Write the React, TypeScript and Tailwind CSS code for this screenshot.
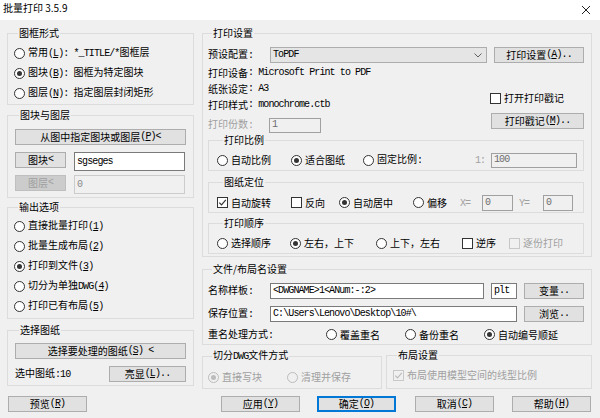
import React from "react";

type P = { children?: React.ReactNode; className?: string };

function M({ children, className = "" }: P) {
  return <span className={"font-['Liberation_Mono'] tracking-[-0.9px] " + className}>{children}</span>;
}

function Radio({
  checked = false,
  disabled = false,
  children,
  className = "",
}: P & { checked?: boolean; disabled?: boolean }) {
  return (
    <div className={"flex items-center shrink-0 " + className}>
      <span
        className={
          "w-[11px] h-[11px] rounded-full border flex items-center justify-center shrink-0 " +
          (disabled ? "border-[#bcbcbc] bg-[#f0f0f0]" : "border-[#333333] bg-white")
        }
      >
        {checked ? (
          <span className={"w-[5px] h-[5px] rounded-full " + (disabled ? "bg-[#bcbcbc]" : "bg-[#333333]")} />
        ) : null}
      </span>
      <span className={"ml-[3px] whitespace-nowrap " + (disabled ? "text-[#a0a0a0]" : "text-black")}>{children}</span>
    </div>
  );
}

function Check({
  checked = false,
  disabled = false,
  children,
  className = "",
}: P & { checked?: boolean; disabled?: boolean }) {
  return (
    <div className={"flex items-center shrink-0 " + className}>
      <span
        className={
          "w-[11px] h-[11px] border flex items-center justify-center shrink-0 " +
          (disabled ? "border-[#c8c8c8] bg-[#f0f0f0]" : "border-[#333333] bg-white")
        }
      >
        {checked ? (
          <svg width="9" height="9" viewBox="0 0 9 9">
            <path
              d="M1.3 4.6 L3.5 6.8 L7.8 1.8"
              stroke={disabled ? "#bcbcbc" : "#333333"}
              strokeWidth="1.2"
              fill="none"
            />
          </svg>
        ) : null}
      </span>
      <span className={"ml-[3px] whitespace-nowrap " + (disabled ? "text-[#a0a0a0]" : "text-black")}>{children}</span>
    </div>
  );
}

function Btn({ children, className = "" }: P) {
  return (
    <div
      className={
        "border border-[#adadad] bg-[#e1e1e1] flex items-center justify-center whitespace-nowrap shrink-0 " + className
      }
    >
      {children}
    </div>
  );
}

function Field({ children, className = "", disabled = false }: P & { disabled?: boolean }) {
  return (
    <div
      className={
        "border flex items-center pl-[2px] overflow-hidden whitespace-nowrap shrink-0 " +
        (disabled ? "bg-[#f0f0f0] border-[#a0a0a0] text-[#6d6d6d]" : "bg-white border-[#7a7a7a] text-black") +
        " " +
        className
      }
    >
      {children}
    </div>
  );
}

function Group({ title, legendMl = "ml-[4px]", className = "", children }: P & { title: React.ReactNode; legendMl?: string }) {
  return (
    <fieldset className={"border border-[#dcdcdc] min-w-0 " + className}>
      <legend className={"px-[1px] leading-[14px] " + legendMl}>{title}</legend>
      {children}
    </fieldset>
  );
}

export default function App() {
  return (
    <div className="w-[600px] h-[418px] bg-[#f0f0f0] text-[10px] leading-[14px] text-black font-['Noto_Sans_CJK_SC',sans-serif] overflow-hidden flex flex-col">
      {/* title bar */}
      <div className="h-[20px] bg-white flex items-start justify-between shrink-0">
        <div className="pl-[3px] pt-[1px] leading-[14px]">批量打印 3.5.9</div>
        <svg className="mt-[5px] mr-[9px]" width="10" height="10" viewBox="0 0 10 10">
          <path d="M1 1 L9 9 M9 1 L1 9" stroke="#222" strokeWidth="1" />
        </svg>
      </div>

      {/* main */}
      <div className="flex pl-[7px] pt-[6px] items-start">
        {/* left column */}
        <div className="w-[187px] flex flex-col shrink-0">
          <Group title="图框形式" className="pt-[3px] pb-[1px] pl-[6px]">
            <Radio className="h-[20px]">
              常用<M>(<u>L</u>): *_TITLE/*</M>图框层
            </Radio>
            <Radio checked className="h-[20px]">
              图块<M>(<u>B</u>): </M>图框为特定图块
            </Radio>
            <Radio className="h-[20px]">
              图层<M>(<u>N</u>): </M>指定图层封闭矩形
            </Radio>
          </Group>

          <Group title="图块与图层" className="mt-[3px] pb-[3px] px-[7px]">
            <Btn className="mt-[7px] h-[16px] w-full">
              从图中指定图块或图层<M>(<u>P</u>)&lt;</M>
            </Btn>
            <div className="mt-[7px] flex h-[19px] items-start">
              <Btn className="w-[51px] h-[16px]">
                图块<M>&lt;</M>
              </Btn>
              <Field className="ml-[8px] w-[111px] h-[19px]">
                <M>sgseges</M>
              </Field>
            </div>
            <div className="mt-[4px] flex h-[19px] items-start">
              <div className="w-[51px] h-[16px] border border-[#bfbfbf] bg-[#cccccc] text-[#a0a0a0] flex items-center justify-center shrink-0">
                图层<M>&lt;</M>
              </div>
              <div className="ml-[8px] w-[111px] h-[19px] border border-[#cccccc] bg-[#f0f0f0] text-[#8a8a8a] flex items-center pl-[2px] shrink-0">
                <M>0</M>
              </div>
            </div>
          </Group>

          <Group title="输出选项" className="mt-[2px] pt-[2px] pb-[2px] pl-[6px]">
            <Radio className="h-[20px]">
              直接批量打印<M>(<u>1</u>)</M>
            </Radio>
            <Radio className="h-[20px]">
              批量生成布局<M>(<u>2</u>)</M>
            </Radio>
            <Radio checked className="h-[20px]">
              打印到文件<M>(<u>3</u>)</M>
            </Radio>
            <Radio className="h-[20px]">
              切分为单独<M>DWG(<u>4</u>)</M>
            </Radio>
            <Radio className="h-[20px]">
              打印已有布局<M>(<u>5</u>)</M>
            </Radio>
          </Group>

          <Group title="选择图纸" className="mt-[4px] pb-[3px] px-[7px]">
            <Btn className="mt-[6px] h-[16px] w-full">
              选择要处理的图纸<M>(<u>S</u>) &lt;</M>
            </Btn>
            <div className="mt-[7px] h-[16px] flex items-center">
              <span className="whitespace-nowrap">
                选中图纸<M>:10</M>
              </span>
              <Btn className="ml-auto w-[77px] h-[16px]">
                亮显<M>(<u>L</u>)..</M>
              </Btn>
            </div>
          </Group>
        </div>

        {/* right column */}
        <div className="ml-[8px] w-[390px] flex flex-col shrink-0">
          <Group title="打印设置" className="pl-[5px] pr-[7px] pb-[2px]">
            <div className="mt-[7px] h-[16px] flex items-center">
              <span className="w-[62px] shrink-0 whitespace-nowrap">
                预设配置<M>:</M>
              </span>
              <div className="w-[217px] h-[16px] border border-[#adadad] bg-[#e5e5e5] flex items-center pl-[2px] pr-[4px] shrink-0">
                <M>ToPDF</M>
                <svg className="ml-auto" width="8" height="5" viewBox="0 0 8 5">
                  <path d="M0.5 0.5 L4 4 L7.5 0.5" stroke="#606060" fill="none" />
                </svg>
              </div>
              <Btn className="ml-[7px] w-[90px] h-[16px]">
                打印设置<M>(<u>A</u>)..</M>
              </Btn>
            </div>

            <div className="mt-[2px] flex">
              <div className="flex-1 flex flex-col">
                <div className="h-[16px] flex items-center whitespace-nowrap">
                  打印设备<M>: Microsoft Print to PDF</M>
                </div>
                <div className="h-[16px] flex items-center whitespace-nowrap">
                  纸张设定<M>: A3</M>
                </div>
                <div className="h-[16px] flex items-center whitespace-nowrap">
                  打印样式<M>: monochrome.ctb</M>
                </div>
                <div className="mt-[4px] h-[16px] flex items-center text-[#a0a0a0]">
                  <span className="w-[61px] shrink-0 whitespace-nowrap">
                    打印份数<M>:</M>
                  </span>
                  <Field disabled className="w-[52px] h-[15px]">
                    <M>1</M>
                  </Field>
                </div>
              </div>
              <div className="w-[94px] flex flex-col shrink-0">
                <Check className="mt-[26px] h-[14px]">打开打印戳记</Check>
                <Btn className="mt-[8px] ml-auto w-[93px] h-[16px]">
                  打印戳记<M>(<u>M</u>)..</M>
                </Btn>
              </div>
            </div>

            <Group title="打印比例" legendMl="ml-[6px]" className="pl-[8px] pb-[2px]">
              <div className="mt-[5px] h-[16px] flex items-center">
                <Radio className="w-[74px]">自动比例</Radio>
                <Radio checked className="w-[72px]">
                  适合图纸
                </Radio>
                <Radio className="w-[112px]">
                  固定比例<M>:</M>
                </Radio>
                <div className="w-[16px] shrink-0 text-[#a0a0a0]">
                  <M>1:</M>
                </div>
                <Field disabled className="w-[86px] h-[15px]">
                  <M>100</M>
                </Field>
              </div>
            </Group>

            <Group title="图纸定位" legendMl="ml-[6px]" className="mt-[4px] pl-[8px] pb-[1px]">
              <div className="mt-[5px] h-[17px] flex items-center">
                <Check checked className="w-[74px]">
                  自动旋转
                </Check>
                <Check className="w-[48px]">反向</Check>
                <Radio checked className="w-[74px]">
                  自动居中
                </Radio>
                <Radio className="w-[47px]">偏移</Radio>
                <div className="w-[22px] shrink-0 text-[#a0a0a0]">
                  <M>X=</M>
                </div>
                <Field disabled className="w-[31px] h-[16px]">
                  <M>0</M>
                </Field>
                <div className="ml-[6px] w-[24px] shrink-0 text-[#a0a0a0]">
                  <M>Y=</M>
                </div>
                <Field disabled className="w-[30px] h-[16px]">
                  <M>0</M>
                </Field>
              </div>
            </Group>

            <Group title="打印顺序" legendMl="ml-[6px]" className="mt-[3px] pl-[8px] pb-[2px]">
              <div className="mt-[5px] h-[16px] flex items-center">
                <Radio className="w-[73px]">选择顺序</Radio>
                <Radio checked className="w-[86px]">
                  左右，上下
                </Radio>
                <Radio className="w-[86px]">上下，左右</Radio>
                <Check className="w-[47px]">逆序</Check>
                <Check disabled>逐份打印</Check>
              </div>
            </Group>
          </Group>

          <Group title="文件/布局名设置" className="mt-[5px] pl-[5px] pr-[7px] pb-[1px]">
            <div className="mt-[6px] h-[17px] flex items-center">
              <span className="w-[62px] shrink-0 whitespace-nowrap">
                名称样板<M>:</M>
              </span>
              <Field className="w-[214px] h-[16px]">
                <M>&lt;DWGNAME&gt;1&lt;ANum:-:2&gt;</M>
              </Field>
              <Field className="ml-[7px] w-[26px] h-[16px]">
                <M>plt</M>
              </Field>
              <Btn className="ml-[7px] w-[60px] h-[16px]">
                变量<M>..</M>
              </Btn>
            </div>
            <div className="mt-[6px] h-[17px] flex items-center">
              <span className="w-[62px] shrink-0 whitespace-nowrap">
                保存位置<M>:</M>
              </span>
              <Field className="w-[247px] h-[16px]">
                <M>C:\Users\Lenovo\Desktop\10#\</M>
              </Field>
              <Btn className="ml-[7px] w-[60px] h-[16px]">
                浏览<M>..</M>
              </Btn>
            </div>
            <div className="mt-[4px] h-[17px] flex items-center">
              <span className="w-[118px] shrink-0 whitespace-nowrap">
                重名处理方式<M>:</M>
              </span>
              <Radio className="w-[79px]">覆盖重名</Radio>
              <Radio className="w-[79px]">备份重名</Radio>
              <Radio checked>自动编号顺延</Radio>
            </div>
          </Group>

          <div className="mt-[3px] flex">
            <Group
              title={
                <>
                  切分<M>DWG</M>文件方式
                </>
              }
              className="w-[180px] shrink-0 pl-[5px] pb-[2px]"
            >
              <div className="mt-[4px] h-[18px] flex items-center">
                <Radio checked disabled className="w-[79px]">
                  直接写块
                </Radio>
                <Radio disabled>清理并保存</Radio>
              </div>
            </Group>
            <Group title="布局设置" className="ml-[4px] w-[206px] shrink-0 pl-[6px] pb-[2px]">
              <div className="mt-[4px] h-[18px] flex items-center">
                <Check checked disabled>
                  布局使用模型空间的线型比例
                </Check>
              </div>
            </Group>
          </div>
        </div>
      </div>

      {/* bottom buttons */}
      <div className="mt-[7px] pl-[8px] flex">
        <Btn className="w-[79px] h-[16px]">
          预览<M>(<u>R</u>)</M>
        </Btn>
        <Btn className="ml-[134px] w-[79px] h-[16px]">
          应用<M>(<u>Y</u>)</M>
        </Btn>
        <div className="ml-[17px] w-[79px] h-[16px] border border-[#0078d7] shadow-[inset_0_0_0_1px_#0078d7] bg-[#e1e1e1] flex items-center justify-center shrink-0">
          确定<M>(<u>O</u>)</M>
        </div>
        <Btn className="ml-[19px] w-[79px] h-[16px]">
          取消<M>(<u>C</u>)</M>
        </Btn>
        <Btn className="ml-[18px] w-[79px] h-[16px]">
          帮助<M>(<u>H</u>)</M>
        </Btn>
      </div>
    </div>
  );
}
